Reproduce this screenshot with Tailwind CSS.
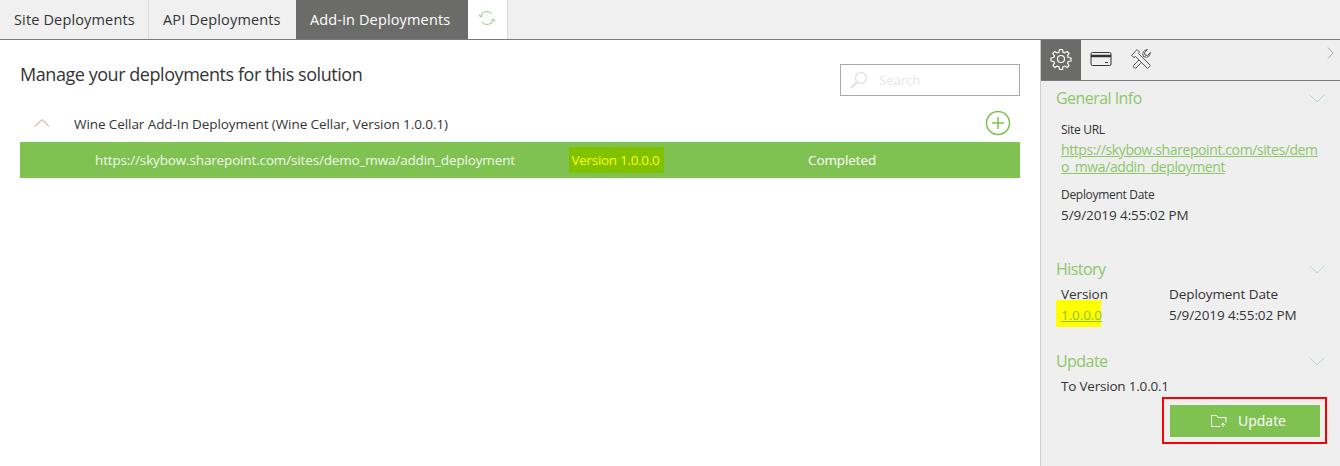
<!DOCTYPE html>
<html lang="en">

<head>
    <meta charset="UTF-8">
    <title>Add-in Deployments</title>
    <script src="https://cdn.jsdelivr.net/npm/@tailwindcss/browser@4"></script>
</head>

<body class="bg-white w-[1340px] h-[466px] overflow-hidden font-['Open_Sans',sans-serif] text-[14px] text-[#333]">
    <!-- top tabs -->
    <div class="flex h-10 bg-[#f0f0f0] border-b border-[#7a7a7a] text-[14.5px] tracking-[0.15px]">
        <div class="w-[149px] border-r border-[#dcdcdc] pl-[14px] leading-[39px]">Site Deployments</div>
        <div class="w-[147px] pl-[14px] leading-[39px]">API Deployments</div>
        <div class="w-[172px] bg-[#6b6b69] text-white pl-[14px] leading-[39px]">Add-in Deployments</div>
        <div class="w-10 bg-white border-r border-[#dcdcdc] flex items-center justify-center pb-[3px]">
            <svg class="-ml-[2px]" width="18" height="18" viewBox="0 0 18 18" fill="none" stroke="#9ccb7c" stroke-width="1">
                <path d="M2.5 7.5A6.5 6.5 0 0 1 14 5"/>
                <path d="M15.5 10.5A6.5 6.5 0 0 1 4 13"/>
                <path d="M1 5.5l1.5 2.5L5 6.5"/>
                <path d="M17 12.500l-1.500-2.500L13 11.500"/>
            </svg>
        </div>
    </div>

    <div class="flex h-[426px]">
        <!-- main area -->
        <div class="w-[1040px] px-5">
            <div class="flex justify-between h-[60px] pt-6">
                <h1 class="text-[18px] leading-[22px] tracking-[-0.45px] -mt-[1px]">Manage your deployments for this solution</h1>
                <div class="w-[180px] h-8 border border-[#aaaaaa] flex items-center pl-2 gap-2 text-[13px] text-[#e6e6e6]">
                    <svg width="20" height="20" viewBox="0 0 20 20" fill="none" stroke="#e4e4e4" stroke-width="1.500">
                        <circle cx="12" cy="8" r="5.500"/>
                        <path d="M8 12l-6 6" stroke-width="2.500"/>
                    </svg>
                    <span class="ml-[2px] pt-[1px]">Search</span>
                </div>
            </div>
            <div class="flex items-center h-[42px] pt-[6px] text-[13.5px] tracking-[-0.08px]">
                <svg class="ml-[14px] w-4 h-[10px] mr-6 -mt-[2px]" viewBox="0 0 16 10" fill="none" stroke="#c98f78" stroke-width="1">
                    <path d="M1 8.500L8 1.500l7 7"/>
                </svg>
                <span>Wine Cellar Add-In Deployment (Wine Cellar, Version 1.0.0.1)</span>
                <svg class="ml-auto mr-[9px] -mt-[2px]" width="26" height="26" viewBox="0 0 26 26" fill="none" stroke="#7fc252" stroke-width="1.500">
                    <circle cx="13" cy="13" r="11.500"/>
                    <path d="M13 7v12M7 13h12"/>
                </svg>
            </div>
            <div class="flex items-center h-9 bg-[#7fc252] text-white text-[13.5px]">
                <span class="w-[474px] pl-[75px] text-[#f0f7ea] tracking-[-0.15px]">https://skybow.sharepoint.com/sites/demo_mwa/addin_deployment</span>
                <span class="w-[95px] h-[26px] bg-[#80c200] text-[#ffff00] leading-[26px] text-center ml-[75px] tracking-[-0.3px] pr-[2px]">Version 1.0.0.0</span>
                <span class="ml-[144px] tracking-[-0.1px]">Completed</span>
            </div>
        </div>

        <!-- side panel -->
        <div class="w-[300px] bg-[#efefef] border-l border-[#cccccc] text-[13.5px] tracking-[-0.08px]">
            <div class="flex h-[41px] border-b border-[#7a7a7a] relative">
                <div class="w-10 bg-[#6b6b69] flex items-center justify-center pb-[3px]">
                    <svg width="22" height="22" viewBox="0 0 22 22" fill="none" stroke="#ffffff" stroke-width="1.200" stroke-linejoin="round">
                        <circle cx="11" cy="11" r="3.500"/>
                        <path d="M9.500 1.500h3l.5 2.800 1.700.7 2.300-1.600 2.100 2.100-1.600 2.300.7 1.700 2.800.5v3l-2.800.5-.7 1.700 1.600 2.300-2.100 2.100-2.300-1.600-1.700.7-.5 2.800h-3l-.5-2.800-1.700-.7-2.300 1.600-2.100-2.100 1.600-2.300-.7-1.700-2.800-.5v-3l2.800-.5.7-1.700L2.800 5.500l2.100-2.100 2.300 1.600 1.700-.7z"/>
                    </svg>
                </div>
                <div class="w-10 flex items-center justify-center pb-[3px]">
                    <svg width="22" height="16" viewBox="0 0 22 16" fill="none" stroke="#333333" stroke-width="1">
                        <rect x="1" y="1.500" width="20" height="13" rx="1.500"/>
                        <path d="M1 5h20" stroke-width="2.500"/>
                        <path d="M15 11.500h3"/>
                    </svg>
                </div>
                <div class="w-10 flex items-center justify-center pb-[3px]">
                    <svg width="22" height="22" viewBox="0 0 22 22" fill="none" stroke="#555555" stroke-width="1" stroke-linejoin="round">
                        <path d="M1.500 7.500L7 1.500l2.500 2.500-1 1.500L20.500 17.500l-3 3L5.500 8.500 4 9.500z"/>
                        <path d="M9 12l-5.500 5.500a1.500 1.500 0 0 0 0 1.500l1 1a1.500 1.500 0 0 0 1.500 0L11.500 14.500"/>
                        <path d="M12.500 9.500l1-1a4.500 4.500 0 0 1 1-6l3-1-3 3 .5 2.500 2.500.5 3-3-1 3a4.500 4.500 0 0 1-6 1l-1 1"/>
                    </svg>
                </div>
                <svg class="absolute right-[6px] top-[7px]" width="7" height="12" viewBox="0 0 7 12" fill="none" stroke="#a9a9b5" stroke-width="1">
                    <path d="M1 .5l5 5.500-5 5.500"/>
                </svg>
            </div>

            <div class="pl-[15px] pr-[15px]">
                <div class="flex justify-between items-center h-[34px] text-[16px] tracking-[-0.55px] text-[#8cc768]">
                    <span>General Info</span>
                    <svg width="16" height="9" viewBox="0 0 16 9" fill="none" stroke="#b5dbc0" stroke-width="1">
                        <path d="M.5 .5l7.500 7.500 7.500-7.500"/>
                    </svg>
                </div>
                <div class="pl-[5px] pt-[5px]">
                    <div class="text-[12px] leading-[20px] tracking-[-0.3px]">Site URL</div>
                    <a class="block mt-[1px] w-[258px] break-all text-[14px] leading-[17px] tracking-[-0.4px] text-[#8cc768] underline">https://skybow.sharepoint.com/sites/demo_mwa/addin_deployment</a>
                    <div class="mt-[10px] text-[12px] leading-[20px] tracking-[-0.3px]">Deployment Date</div>
                    <div class="leading-[20px]">5/9/2019 4:55:02 PM</div>
                </div>

                <div class="flex justify-between items-center h-[34px] mt-[27px] text-[16px] tracking-[-0.55px] text-[#8cc768]">
                    <span>History</span>
                    <svg width="16" height="9" viewBox="0 0 16 9" fill="none" stroke="#b5dbc0" stroke-width="1">
                        <path d="M.5 .5l7.500 7.500 7.500-7.500"/>
                    </svg>
                </div>
                <div class="grid grid-cols-[108px_1fr] pl-[5px] leading-[21px] -mt-[2px]">
                    <div class="col-start-1">Version</div>
                    <div>Deployment Date</div>
                    <div><a class="block w-[45px] -ml-[5px] pl-[5px] -mt-[5px] pt-[5px] -mb-[1px] pb-[1px] bg-[#ffff00] text-[#8cc230] underline">1.0.0.0</a></div>
                    <div>5/9/2019 4:55:02 PM</div>
                </div>

                <div class="flex justify-between items-center h-[34px] mt-[18px] text-[16px] tracking-[-0.55px] text-[#8cc768]">
                    <span>Update</span>
                    <svg width="16" height="9" viewBox="0 0 16 9" fill="none" stroke="#b5dbc0" stroke-width="1">
                        <path d="M.5 .5l7.500 7.500 7.500-7.500"/>
                    </svg>
                </div>
                <div class="pl-[5px] leading-[18px] tracking-[-0.2px] -mt-[1px]">To Version 1.0.0.1</div>
                <div class="flex justify-end -mr-[2px] mt-[2px]">
                    <div class="w-[165px] h-[47px] border-[2px] border-[#ff0000] flex items-center justify-center">
                        <button class="w-[150px] h-8 pl-[8px] bg-[#7fc252] text-white text-[14px] tracking-normal flex items-center justify-center gap-[11px]">
                            <svg width="16" height="14" viewBox="0 0 16 14" fill="none" stroke="#ffffff" stroke-width="1">
                                <path d="M.5 12.500V1.500h5l1.500 2h8v5"/>
                                <path d="M.5 12.500H9"/>
                                <path d="M12 13V9M10 11l2-2 2 2"/>
                            </svg>
                            <span>Update</span>
                        </button>
                    </div>
                </div>
            </div>
        </div>
    </div>
</body>

</html>
